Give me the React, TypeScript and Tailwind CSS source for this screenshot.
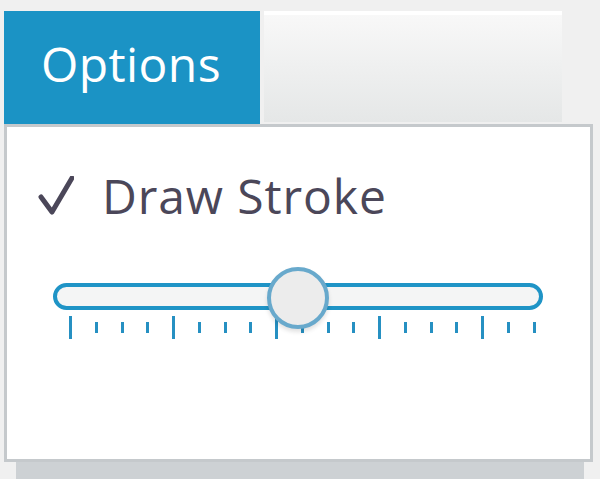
const TICKS = Array.from({ length: 19 }, (_, i) => i);

function Check() {
  return (
    <svg width="36" height="40" viewBox="0 0 36 40" className="shrink-0">
      <path d="M3 21 L14 36 L34 2" fill="none" stroke="#4b4759" strokeWidth="5" strokeLinecap="round" strokeLinejoin="round" />
    </svg>
  );
}

function Slider() {
  return (
    <div className="relative ml-[46px] w-[490px]">
      <div className="h-[27px] rounded-full border-4 border-[#1f94c6] bg-[#f4f5f5]" />
      <div className="mt-[6px] flex h-[23px] items-center justify-between pl-[16px] pr-[7px]">
        {TICKS.map((i) => (
          <span key={i} className={i % 4 === 0 ? "h-[23px] w-[3px] bg-[#2690c2]" : "h-[11px] w-[3px] bg-[#2690c2]"} />
        ))}
      </div>
      {/* thumb */}
      <div className="absolute left-[214px] top-[-16px] z-10 h-[62px] w-[62px] rounded-full border-4 border-[#68a9cc] bg-[#ececec] shadow-[0_3px_4px_rgba(0,0,0,0.12)]" />
    </div>
  );
}

export default function App() {
  return (
    <div className="h-[479px] w-[600px] overflow-hidden bg-[#f0f0f0] font-['Open_Sans',sans-serif]">
      <div className="flex items-start pl-[4px] pt-[11px]">
        <div className="h-[113px] w-[256px] bg-[#1b93c5] pl-[37px] pt-[29px] text-[48px] leading-[48px] tracking-[0.4px] text-white">
          Options
        </div>
        <div className="ml-[4px] h-[111px] w-[298px] border-t-4 border-white bg-gradient-to-b from-[#f8f8f8] to-[#e5e7e7]" />
      </div>
      <div className="ml-[4px] h-[338px] w-[589px] border-[3px] border-[#c5c9cc] bg-white">
        <div className="mt-[45px] flex items-center pl-[31px]">
          <Check />
          <span className="ml-[28px] text-[48px] leading-[48px] tracking-[0.9px] text-[#4b4759]">Draw Stroke</span>
        </div>
        <div className="mt-[63px]">
          <Slider />
        </div>
      </div>
      <div className="mx-[16px] h-[17px] bg-[#cdd1d4]" />
    </div>
  );
}
